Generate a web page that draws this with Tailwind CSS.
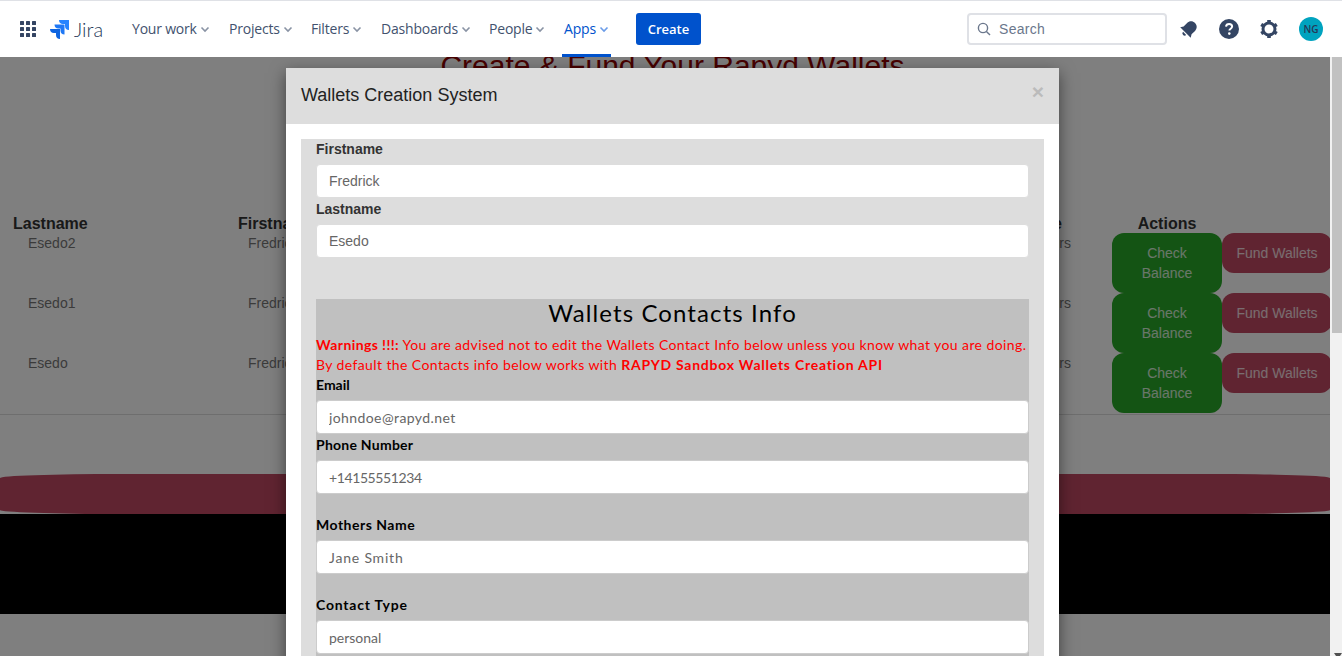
<!DOCTYPE html>
<html lang="en">
  <head>
    <meta charset="UTF-8" />
    <meta name="viewport" content="width=device-width, initial-scale=1.0" />
    <title>Wallets Creation System</title>
    <script src="https://cdn.jsdelivr.net/npm/@tailwindcss/browser@4"></script>
  </head>
  <body class="h-[656px] overflow-hidden bg-white font-['Liberation_Sans',sans-serif] text-sm text-[#333]">
    <!-- jira top bar -->
    <header class="relative z-20 flex h-[57px] items-center border-t border-[#dfe1e6] bg-white pl-5 pr-[19px] font-['Open_Sans',sans-serif] text-[#42526e]">
      <svg class="mr-[14px] h-4 w-4" viewBox="0 0 16 16" fill="#344563">
        <rect x="0" y="0" width="4" height="4" rx=".5" /><rect x="6" y="0" width="4" height="4" rx=".5" /><rect x="12" y="0" width="4" height="4" rx=".5" />
        <rect x="0" y="6" width="4" height="4" rx=".5" /><rect x="6" y="6" width="4" height="4" rx=".5" /><rect x="12" y="6" width="4" height="4" rx=".5" />
        <rect x="0" y="12" width="4" height="4" rx=".5" /><rect x="6" y="12" width="4" height="4" rx=".5" /><rect x="12" y="12" width="4" height="4" rx=".5" />
      </svg>
      <svg class="h-[19px] w-5" viewBox="0 0 20 19">
        <path d="M0 0H10V10C7.5 10 6 8.5 6 6V4H3.8C1.6 4 0 2.4 0 0z" transform="translate(9 0)" fill="#2684ff" />
        <path d="M0 0H10V10C7.5 10 6 8.5 6 6V4H3.8C1.6 4 0 2.4 0 0z" transform="translate(4.5 4.5)" fill="#1f78f5" />
        <path d="M0 0H10V10C7.5 10 6 8.5 6 6V4H3.8C1.6 4 0 2.4 0 0z" transform="translate(0 9)" fill="#0e64e0" />
      </svg>
      <span class="ml-1 w-[58px] font-['Lato',sans-serif] text-[20px] leading-none font-light text-[#253858]">Jira</span>
      <nav class="flex h-full items-center tracking-[-0.2px]">
        <a class="flex w-[97px] items-center gap-[2px]">Your work<svg class="h-3 w-3" viewBox="0 0 12 12" fill="none" stroke="#8993a4" stroke-width="1.6"><path d="M2.5 4.5 6 8l3.5-3.5" /></svg></a>
        <a class="flex w-[82px] items-center gap-[2px]">Projects<svg class="h-3 w-3" viewBox="0 0 12 12" fill="none" stroke="#8993a4" stroke-width="1.6"><path d="M2.5 4.5 6 8l3.5-3.5" /></svg></a>
        <a class="flex w-[70px] items-center gap-[2px]">Filters<svg class="h-3 w-3" viewBox="0 0 12 12" fill="none" stroke="#8993a4" stroke-width="1.6"><path d="M2.5 4.5 6 8l3.5-3.5" /></svg></a>
        <a class="flex w-[108px] items-center gap-[2px]">Dashboards<svg class="h-3 w-3" viewBox="0 0 12 12" fill="none" stroke="#8993a4" stroke-width="1.6"><path d="M2.5 4.5 6 8l3.5-3.5" /></svg></a>
        <a class="flex w-[75px] items-center gap-[2px]">People<svg class="h-3 w-3" viewBox="0 0 12 12" fill="none" stroke="#8993a4" stroke-width="1.6"><path d="M2.5 4.5 6 8l3.5-3.5" /></svg></a>
        <a class="relative flex h-full w-[72px] items-center gap-[2px] text-[#0052cc]">Apps<svg class="h-3 w-3" viewBox="0 0 12 12" fill="none" stroke="#6b9ce8" stroke-width="1.6"><path d="M2.5 4.5 6 8l3.5-3.5" /></svg><span class="absolute bottom-0 left-[-2px] h-[3px] w-[49px] bg-[#0052cc]"></span></a>
      </nav>
      <button class="h-8 w-[65px] rounded-[3px] bg-[#0052cc] text-[13px] font-semibold text-white">Create</button>
      <div class="ml-auto flex h-8 w-[200px] items-center rounded-[4px] border-2 border-[#dfe1e6] pl-2 font-['Liberation_Sans',sans-serif] text-[#6b778c]">
        <svg class="h-[14px] w-[14px]" viewBox="0 0 14 14" fill="none" stroke="#6b778c" stroke-width="1.4"><circle cx="6" cy="6" r="4.6" /><path d="m9.4 9.4 3.6 3.6" /></svg>
        <span class="ml-[8px] leading-[18px] tracking-[0.3px]">Search</span>
      </div>
      <svg class="ml-[12px] h-5 w-5" viewBox="0 0 20 20" fill="#344563"><g transform="rotate(45 10 10)"><path d="M10 1.5c-3.4 0-5.6 2.5-5.6 5.6V12L2.6 15h14.8l-1.8-3V7.1c0-3.1-2.2-5.6-5.6-5.6z" /><path d="M7.8 16.2a2.2 2.2 0 0 0 4.4 0z" /></g></svg>
      <svg class="ml-[20px] h-5 w-5" viewBox="0 0 20 20"><circle cx="10" cy="10" r="10" fill="#344563" /><path d="M7 7.6c.2-1.7 1.4-2.6 3.1-2.6 1.8 0 3 1 3 2.5 0 2.2-2.7 2.2-2.7 4" fill="none" stroke="#fff" stroke-width="2" /><circle cx="10.3" cy="14.6" r="1.3" fill="#fff" /></svg>
      <svg class="ml-[20px] h-5 w-5" viewBox="0 0 20 20" fill="none"><circle cx="10" cy="10" r="6" stroke="#344563" stroke-width="3" /><path d="M10 1v3M10 16v3M2.2 5.5l2.6 1.5M15.2 13l2.6 1.5M2.2 14.5 4.8 13M15.2 7l2.6-1.5" stroke="#344563" stroke-width="3.6" /></svg>
      <span class="ml-5 flex h-6 w-6 items-center justify-center rounded-full bg-[#00a3bf] text-[10px] font-semibold text-[#253858]">NG</span>
    </header>

    <div class="flex h-[599px]">
      <main class="relative w-[1330px] overflow-hidden bg-white">
        <h1 class="mt-[-11px] pl-[15px] text-center text-[30px] leading-[40px] text-[#900000]">Create &amp; Fund Your Rapyd Wallets</h1>

        <!-- wallets table -->
        <section class="mt-[127px] border-b border-[#ddd] pb-[1px]">
          <div class="flex h-5 text-base leading-[21px] font-bold">
            <span class="w-[238px] pl-[13px]">Lastname</span>
            <span class="flex-1">Firstname</span>
            <span class="w-[50px] text-right">Type</span>
            <span class="ml-[50px] w-[110px] text-center">Actions</span>
            <span class="w-[108px]"></span>
          </div>
          <div class="flex h-[60px] leading-5 text-[#777]">
            <span class="w-[238px] pl-7">Esedo2</span>
            <span class="flex-1 pl-[10px]">Fredrick</span>
            <span class="w-[50px] text-right">rs</span>
            <div class="flex w-[259px] items-start pl-[41px]">
              <button class="h-[60px] w-[110px] shrink-0 rounded-xl bg-[#28a828] px-4 leading-5 text-white/80">Check Balance</button>
              <button class="h-10 w-[110px] shrink-0 rounded-xl bg-[#c04862] leading-5 text-white/80">Fund Wallets</button>
            </div>
          </div>
          <div class="flex h-[60px] leading-5 text-[#777]">
            <span class="w-[238px] pl-7">Esedo1</span>
            <span class="flex-1 pl-[10px]">Fredrick</span>
            <span class="w-[50px] text-right">rs</span>
            <div class="flex w-[259px] items-start pl-[41px]">
              <button class="h-[60px] w-[110px] shrink-0 rounded-xl bg-[#28a828] px-4 leading-5 text-white/80">Check Balance</button>
              <button class="h-10 w-[110px] shrink-0 rounded-xl bg-[#c04862] leading-5 text-white/80">Fund Wallets</button>
            </div>
          </div>
          <div class="flex h-[60px] leading-5 text-[#777]">
            <span class="w-[238px] pl-7">Esedo</span>
            <span class="flex-1 pl-[10px]">Fredrick</span>
            <span class="w-[50px] text-right">rs</span>
            <div class="flex w-[259px] items-start pl-[41px]">
              <button class="h-[60px] w-[110px] shrink-0 rounded-xl bg-[#28a828] px-4 leading-5 text-white/80">Check Balance</button>
              <button class="h-10 w-[110px] shrink-0 rounded-xl bg-[#c04862] leading-5 text-white/80">Fund Wallets</button>
            </div>
          </div>
        </section>

        <div class="mt-[59px] h-10 rounded-[120px/4px] bg-[#c04862]"></div>
        <div class="h-[100px] bg-black"></div>

        <!-- backdrop + modal -->
        <div class="absolute inset-0 bg-black/50"></div>
        <div class="absolute top-[11px] left-[286px] h-[700px] w-[773px] bg-white shadow-[0_5px_15px_rgba(0,0,0,0.5)]">
          <div class="relative flex h-[56px] items-center bg-[#ddd] px-[15px] text-[18px] text-[#222]">
            Wallets Creation System
            <span class="absolute top-[9px] right-[15px] text-[21px] font-bold text-[#bbb]">×</span>
          </div>
          <div class="p-[15px]">
            <form class="bg-[#ddd] px-[15px]">
              <label class="mb-[5px] block leading-5 font-bold">Firstname</label>
              <input class="block h-[34px] w-full rounded-[4px] border border-[#ddd] bg-white px-3 text-[#666]" value="Fredrick" />
              <label class="mt-px mb-[5px] block leading-5 font-bold">Lastname</label>
              <input class="block h-[34px] w-full rounded-[4px] border border-[#ddd] bg-white px-3 text-[#666]" value="Esedo" />

              <div class="mt-[41px] bg-[#c0c0c0] pb-5 font-['Comic_Sans_MS','Lato',sans-serif] text-black">
                <h2 class="h-9 text-center text-2xl leading-[28px] tracking-[1.1px]">Wallets Contacts Info</h2>
                <p class="leading-5 tracking-[0.4px] text-[#f00]"><b>Warnings !!!:</b> You are advised not to edit the Wallets Contact Info below unless you know what you are doing.<br />By default the Contacts info below works with <b class="tracking-[0.75px]">RAPYD Sandbox Wallets Creation API</b></p>
                <label class="mb-[5px] block leading-5 font-bold">Email</label>
                <input class="block h-[34px] w-full rounded-[4px] border border-[#ccc] bg-white px-3 tracking-[0.4px] text-[#666]" value="johndoe@rapyd.net" />
                <label class="mt-px mb-[5px] block leading-5 font-bold tracking-[0.25px]">Phone Number</label>
                <input class="block h-[34px] w-full rounded-[4px] border border-[#ccc] bg-white px-3 tracking-[-0.4px] text-[#666]" value="+14155551234" />
                <label class="mt-[21px] mb-[5px] block leading-5 font-bold tracking-[0.5px]">Mothers Name</label>
                <input class="block h-[34px] w-full rounded-[4px] border border-[#ccc] bg-white px-3 tracking-[0.8px] text-[#666]" value="Jane Smith" />
                <label class="mt-[21px] mb-[5px] block leading-5 font-bold tracking-[0.8px]">Contact Type</label>
                <input class="block h-[34px] w-full rounded-[4px] border border-[#ccc] bg-white px-3 text-[#666]" value="personal" />
              </div>
            </form>
          </div>
        </div>
      </main>

      <!-- page scrollbar -->
      <aside class="relative w-3 bg-[#f1f1f1] pl-[2px]">
        <div class="h-[276px] bg-[#c1c1c1]"></div>
        <svg class="absolute right-0 bottom-0 h-[3px] w-2" viewBox="0 0 8 3" fill="#505050"><path d="M0 0h8L6 3H2z" /></svg>
      </aside>
    </div>
  </body>
</html>
